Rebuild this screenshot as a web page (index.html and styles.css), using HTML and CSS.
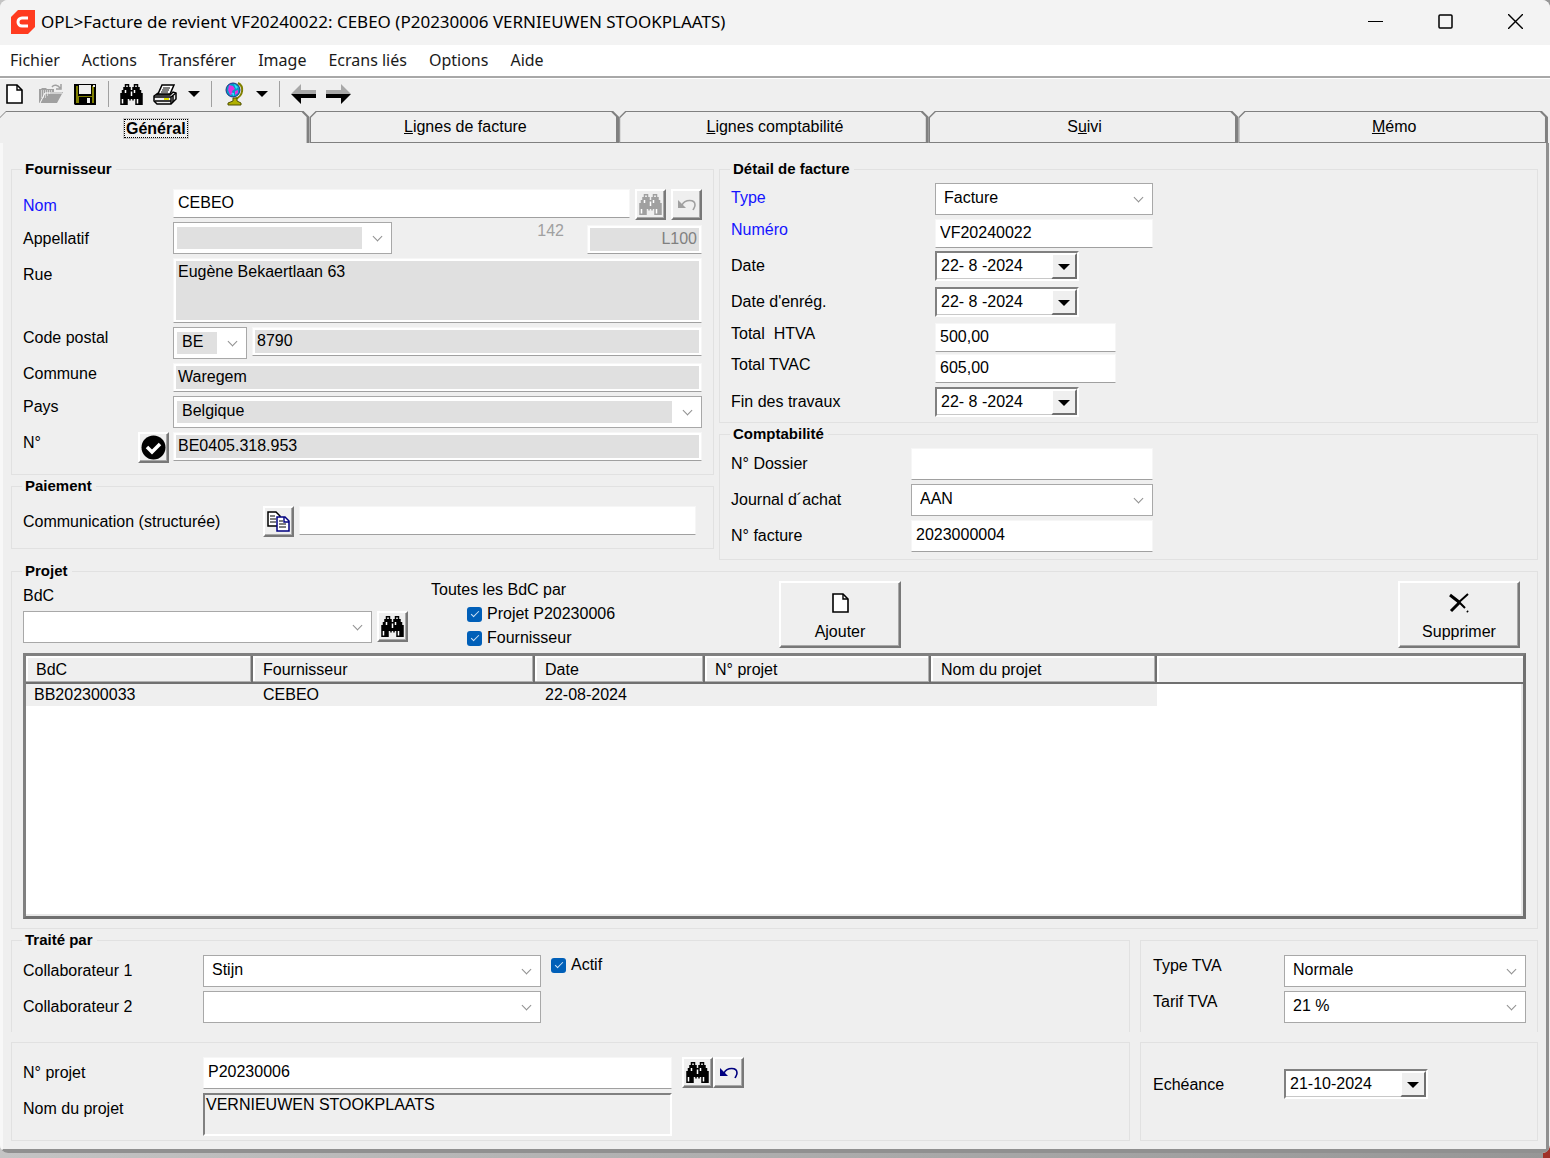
FILE: index.html
```html
<!DOCTYPE html>
<html lang="fr">
	<head>
		<meta charset="utf-8">
		<title>OPL&gt;Facture de revient VF20240022</title>
		<link rel="stylesheet" href="styles.css">
	</head>
	<body>
		<!-- icones partagees -->
		<svg class="defs" aria-hidden="true">
			<symbol id="i-find" viewBox="0 0 15 14">
				<path fill="currentColor" d="M3 0h3v2h1v2h1V2h1V0h3v2h1v2h1v2h1v8h-5v-4H9v1H8v-1H7v1H6v-1H5v4H0V6h1V4h1V2h1z"/>
				<path fill="#fff" d="M4 1h1v1H4zM10 1h1v1h-1zM3 4h1v2H3zM9 4h1v2H9zM7 5h1v3H7zM1 10h1v3H1zM11 10h1v3h-1z"/>
			</symbol>
			<symbol id="i-undo" viewBox="0 0 18 12">
				<path fill="currentColor" d="M0 1l8 8H0z"/>
				<path fill="none" stroke="currentColor" stroke-width="1.6" d="M4 6c3-6 13-6 13 0 0 2-1 3-2 5"/>
			</symbol>
			<symbol id="i-new" viewBox="0 0 17 20">
				<path fill="#fff" stroke="#000" stroke-width="1.6" d="M1 1h10l5 5v13H1z"/>
				<path fill="none" stroke="#000" stroke-width="1.4" d="M11 1v5h5"/>
			</symbol>
		</svg>

		<div class="window">
			<header class="titlebar">
				<svg class="logo" viewBox="0 0 24 24"><path fill="#ff3b1f" d="M7 0h17v17l-7 7H0V7z"/><path fill="none" stroke="#fff" stroke-width="3" d="M17 8h-6a4 4 0 0 0 0 8h6"/></svg>
				<h1>OPL&gt;Facture de revient VF20240022: CEBEO (P20230006 VERNIEUWEN STOOKPLAATS)</h1>
				<button type="button" class="winbtn" aria-label="Réduire"><svg width="15" height="15" viewBox="0 0 15 15"><path stroke="#000" d="M0 7.500h15"/></svg></button>
				<button type="button" class="winbtn" aria-label="Agrandir"><svg width="15" height="15" viewBox="0 0 15 15"><rect x="1" y="1" width="13" height="13" rx="1" fill="none" stroke="#000" stroke-width="1.500"/></svg></button>
				<button type="button" class="winbtn" aria-label="Fermer"><svg width="15" height="15" viewBox="0 0 15 15"><path stroke="#000" stroke-width="1.400" d="M0 0l15 15M15 0L0 15"/></svg></button>
			</header>

			<nav class="menubar">
				<a href="#">Fichier</a>
				<a href="#">Actions</a>
				<a href="#">Transférer</a>
				<a href="#">Image</a>
				<a href="#">Ecrans liés</a>
				<a href="#">Options</a>
				<a href="#">Aide</a>
			</nav>

			<div class="toolbar">
				<button type="button" class="tool" aria-label="Nouveau"><svg width="17" height="20"><use href="#i-new"/></svg></button>
				<button type="button" class="tool" aria-label="Ouvrir">
					<svg width="25" height="20" viewBox="0 0 25 20"><path fill="#a0a0a0" d="M0 5h2l1-1h4l1 1h7v3h9l-6 11H0z"/><path fill="none" stroke="#fff" stroke-dasharray="1 1" d="M2 7h11M2 9h9M2 11h7M2 13h5"/><path fill="none" stroke="#fff" d="M1 19L6 9h17"/><path fill="none" stroke="#a0a0a0" stroke-width="1.500" d="M13 3c2-3 6-2 8 1M22 0v5h-5"/></svg>
				</button>
				<button type="button" class="tool" aria-label="Enregistrer">
					<svg width="22" height="21" viewBox="0 0 22 21"><path d="M0 0h22v21H1l-1-1z"/><path fill="#808000" d="M2 2h2v10h14V2h2v17H2z"/><path fill="#efefef" d="M5 1h12v9H5z"/><path d="M5 13h13v7H5z"/><path fill="#efefef" d="M13 14h3v5h-3zM19 1h2v2h-2z"/></svg>
				</button>
				<span class="sep"></span>
				<button type="button" class="tool" aria-label="Rechercher"><svg width="23" height="21"><use href="#i-find"/></svg></button>
				<button type="button" class="tool" aria-label="Imprimer">
					<svg width="25" height="21" viewBox="0 0 25 21"><path fill="#fff" stroke="#000" stroke-width="1.500" d="M9 1h12l-4 9H5z"/><path stroke="#000" d="M10 4h7M9 6h7M8 8h7"/><path fill="#efefef" stroke="#000" stroke-width="1.500" d="M5 9l-4 3v5l3 3h14l5-5V9l-3-1-3 3H3"/><path fill="none" stroke="#000" stroke-width="1.500" d="M1 13h17l5-4M18 13v7M2 17h16M20 12v6"/><path fill="#e0e000" d="M11 14h5v2h-5z"/></svg>
				</button>
				<button type="button" class="drop" aria-label="Options d'impression"></button>
				<span class="sep"></span>
				<button type="button" class="tool" aria-label="Web">
					<svg width="23" height="24" viewBox="-2 0 23 24"><path fill="none" stroke="#808000" stroke-width="2" d="M13 1c6 3 6 13-3 16"/><circle cx="8" cy="8" r="7" fill="#00a0c8" stroke="#203080"/><path fill="#e030e0" d="M4 3l4 1 2 3-3 2 1 3-3 1-2-5zM10 9l3-1v3l-3 2z"/><path fill="#30e0ff" d="M9 2l4 3-2 2zM6 11h3v3z"/><path fill="#b0b000" stroke="#505000" d="M8 16h4v3l4 2v2H3v-2l5-2z"/></svg>
				</button>
				<button type="button" class="drop" aria-label="Options web"></button>
				<span class="sep"></span>
				<button type="button" class="tool" aria-label="Précédent">
					<svg width="25" height="20" viewBox="0 0 25 20"><path fill="#a8a8a8" d="M0 10L10 0v6h15v4z"/><path d="M0 10h25v4H10v6z"/></svg>
				</button>
				<button type="button" class="tool" aria-label="Suivant">
					<svg width="25" height="20" viewBox="0 0 25 20"><path fill="#a8a8a8" d="M25 10L15 0v6H0v4z"/><path d="M25 10H0v4h15v6z"/></svg>
				</button>
			</div>

			<div class="tabs" role="tablist">
				<button type="button" role="tab" class="tab active" aria-selected="true"><span>Général</span></button>
				<button type="button" role="tab" class="tab"><span><u>L</u>ignes de facture</span></button>
				<button type="button" role="tab" class="tab"><span><u>L</u>ignes comptabilité</span></button>
				<button type="button" role="tab" class="tab"><span>S<u>u</u>ivi</span></button>
				<button type="button" role="tab" class="tab"><span><u>M</u>émo</span></button>
			</div>

			<main class="panel">
				<div class="top">
					<div class="col">
						<fieldset class="group">
							<legend>Fournisseur</legend>
							<div class="form supplier">
								<label class="req" for="nom">Nom</label>
								<div class="line">
									<input type="text" class="text grow" id="nom" value="CEBEO">
									<button type="button" class="sq" disabled aria-label="Rechercher"><svg width="23" height="21"><use href="#i-find"/></svg></button>
									<button type="button" class="sq" disabled aria-label="Annuler"><svg width="18" height="12"><use href="#i-undo"/></svg></button>
								</div>
								<label for="appellatif">Appellatif</label>
								<div class="line bottom">
									<span class="combo off title"><select id="appellatif" disabled><option></option></select></span>
									<output class="num">142</output>
									<input type="text" class="text off code" value="L100" disabled aria-label="Code">
								</div>
								<label for="rue">Rue</label>
								<textarea class="text off street" id="rue" readonly>Eugène Bekaertlaan 63</textarea>
								<label class="tight" for="cp">Code postal</label>
								<div class="line">
									<span class="combo off country"><select disabled aria-label="Code pays"><option>BE</option></select></span>
									<input type="text" class="text off grow" id="cp" value="8790" readonly>
								</div>
								<label class="tight" for="commune">Commune</label>
								<input type="text" class="text off" id="commune" value="Waregem" readonly>
								<label class="tight" for="pays">Pays</label>
								<span class="combo off"><select id="pays" disabled><option>Belgique</option></select></span>
								<div class="vat">
									<label class="tight" for="tva">N°</label>
									<button type="button" class="sq" aria-label="Vérifier"><svg width="25" height="25" viewBox="0 0 25 25"><circle cx="12.500" cy="12.500" r="12"/><path fill="none" stroke="#fff" stroke-width="3.500" d="M6 12l5 5 8-8"/></svg></button>
								</div>
								<input type="text" class="text off" id="tva" value="BE0405.318.953" readonly>
							</div>
						</fieldset>

						<fieldset class="group">
							<legend>Paiement</legend>
							<div class="line payment">
								<label for="comm">Communication (structurée)</label>
								<button type="button" class="sq" aria-label="Copier">
									<svg width="23" height="21" viewBox="0 0 23 21"><path fill="#fff" stroke="#000" stroke-width="1.500" d="M1 1h8l4 4v10H1z"/><path stroke="#000" d="M3 5h5M3 8h6M3 11h6"/><path fill="#fff" stroke="#000080" stroke-width="1.500" d="M10 6h8l4 4v10H10z"/><path fill="none" stroke="#000080" stroke-width="1.400" d="M17 6v5h5"/><path stroke="#000" d="M12 10h4M12 13h7M12 16h7"/></svg>
								</button>
								<input type="text" class="text grow" id="comm">
							</div>
						</fieldset>
					</div>

					<div class="col">
						<fieldset class="group">
							<legend>Détail de facture</legend>
							<div class="form detail">
								<label class="req" for="type">Type</label>
								<span class="combo"><select id="type"><option>Facture</option></select></span>
								<label class="req tight" for="numero">Numéro</label>
								<input type="text" class="text" id="numero" value="VF20240022">
								<label for="date">Date</label>
								<span class="date"><input type="text" id="date" value="22- 8 -2024"><button type="button" aria-label="Calendrier"></button></span>
								<label for="enreg">Date d'enrég.</label>
								<span class="date"><input type="text" id="enreg" value="22- 8 -2024"><button type="button" aria-label="Calendrier"></button></span>
								<label class="tight" for="htva">Total&nbsp; HTVA</label>
								<input type="text" class="text amount" id="htva" value="500,00">
								<label class="tight" for="tvac">Total TVAC</label>
								<input type="text" class="text amount" id="tvac" value="605,00">
								<label for="fin">Fin des travaux</label>
								<span class="date"><input type="text" id="fin" value="22- 8 -2024"><button type="button" aria-label="Calendrier"></button></span>
							</div>
						</fieldset>

						<fieldset class="group fill">
							<legend>Comptabilité</legend>
							<div class="form accounting">
								<label for="dossier">N° Dossier</label>
								<input type="text" class="text tall" id="dossier">
								<label for="journal">Journal d´achat</label>
								<span class="combo"><select id="journal"><option>AAN</option></select></span>
								<label for="nfact">N° facture</label>
								<input type="text" class="text tall" id="nfact" value="2023000004">
							</div>
						</fieldset>
					</div>
				</div>

				<fieldset class="group project">
					<legend>Projet</legend>
					<div class="actions">
						<div class="order">
							<label for="bdc">BdC</label>
							<div class="line">
								<span class="combo grow"><select id="bdc"><option></option></select></span>
								<button type="button" class="sq" aria-label="Rechercher"><svg width="23" height="21"><use href="#i-find"/></svg></button>
							</div>
						</div>
						<div class="filters">
							<p>Toutes les BdC par</p>
							<label class="check"><input type="checkbox" checked>Projet P20230006</label>
							<label class="check"><input type="checkbox" checked>Fournisseur</label>
						</div>
						<button type="button" class="big"><svg width="17" height="20"><use href="#i-new"/></svg>Ajouter</button>
						<button type="button" class="big delete"><svg width="20" height="20" viewBox="0 0 20 20"><path fill="none" stroke="#000" stroke-width="3" d="M1 2l9 7M2 18l9-9"/><path fill="none" stroke="#000" stroke-width="2" d="M9 8l7 7M9 10l10-9M18 18l1 1"/></svg>Supprimer</button>
					</div>
					<div class="list">
						<table>
							<colgroup><col class="c1"><col class="c2"><col class="c3"><col class="c4"><col class="c4"><col></colgroup>
							<thead>
								<tr><th>BdC</th><th>Fournisseur</th><th>Date</th><th>N° projet</th><th>Nom du projet</th><th></th></tr>
							</thead>
							<tbody>
								<tr><td>BB202300033</td><td>CEBEO</td><td>22-08-2024</td><td></td><td></td><td></td></tr>
							</tbody>
						</table>
					</div>
				</fieldset>

				<div class="footer">
					<fieldset class="group opened">
						<legend>Traité par</legend>
						<div class="form staff">
							<label for="col1">Collaborateur 1</label>
							<div class="line">
								<span class="combo"><select id="col1"><option>Stijn</option></select></span>
								<label class="check"><input type="checkbox" checked>Actif</label>
							</div>
							<label for="col2">Collaborateur 2</label>
							<span class="combo"><select id="col2"><option></option></select></span>
						</div>
					</fieldset>
					<div class="box opened">
						<div class="form vatform">
							<label class="tight" for="typetva">Type TVA</label>
							<span class="combo"><select id="typetva"><option>Normale</option></select></span>
							<label class="tight" for="tarif">Tarif TVA</label>
							<span class="combo"><select id="tarif"><option>21 %</option></select></span>
						</div>
					</div>
					<div class="box">
						<div class="form ref">
							<label for="nproj">N° projet</label>
							<div class="line">
								<input type="text" class="text tall wide" id="nproj" value="P20230006">
								<div class="pair">
									<button type="button" class="sq" aria-label="Rechercher"><svg width="23" height="21"><use href="#i-find"/></svg></button>
									<button type="button" class="sq undo" aria-label="Annuler"><svg width="18" height="12"><use href="#i-undo"/></svg></button>
								</div>
							</div>
							<label for="nomproj">Nom du projet</label>
							<textarea class="sunken wide" id="nomproj" readonly>VERNIEUWEN STOOKPLAATS</textarea>
						</div>
					</div>
					<div class="box">
						<div class="form due">
							<label for="ech">Echéance</label>
							<span class="date"><input type="text" id="ech" value="21-10-2024"><button type="button" aria-label="Calendrier"></button></span>
						</div>
					</div>
				</div>
			</main>
		</div>
	</body>
</html>
```
FILE: styles.css
```css
*{box-sizing: border-box;}
body{
	margin: 0;
	min-height: 100vh;
	padding-bottom: 5px;
	display: flex;
	flex-direction: column;
	background:
		linear-gradient(#a03028,#a03028) right bottom/7px 12px no-repeat,
		linear-gradient(to right,#c4c4c4,#969696);
	font-family: "Liberation Sans", Arial, sans-serif;
	font-size: 16px;
	color: #000;
}
input,select,textarea,button{font: inherit;color: inherit;margin: 0;border-radius: 0;}
input,textarea{outline: none;}
p{margin: 0;}
.defs{position: absolute;width: 0;height: 0;}

.window{
	flex: 1;
	display: flex;
	flex-direction: column;
	background: #efefef;
	border-radius: 8px;
	overflow: hidden;
}

/* barre de titre */
.titlebar{
	display: flex;
	align-items: center;
	height: 45px;
	padding: 0 0 2px 11px;
	background: #f3f3f3;
}
.logo{width: 24px;height: 24px;margin-right: 6px;}
.titlebar h1{
	flex: 1;
	margin: 0;
	font: 17px/24px "Noto Sans", "Open Sans", sans-serif;
}
.winbtn{width: 70px;height: 43px;padding: 0;border: 0;background: none;}
.winbtn svg{display: block;margin: 0 auto;}

.menubar{
	display: flex;
	gap: 22px;
	height: 33px;
	padding-left: 10px;
	background: #fff;
	border-bottom: 2px solid #a8a8a8;
	font: 16px/30px "Noto Sans", "Open Sans", sans-serif;
}
.menubar a{color: #1a1a1a;text-decoration: none;}

.toolbar{
	display: flex;
	align-items: center;
	gap: 10px;
	height: 33px;
	padding: 0 0 2px 6px;
	border-top: 1px solid #fff;
}
.tool{min-width: 23px;padding: 0;border: 0;background: none;}
.tool svg{display: block;}
.sep{width: 1px;height: 26px;margin: 0 1px;background: #a0a0a0;}
.drop{
	width: 12px;
	height: 6px;
	padding: 0;
	border: 0;
	background: #000;
	clip-path: polygon(0 0,100% 0,50% 100%);
}

/* onglets */
.tabs{display: flex;height: 32px;padding-right: 2px;}
.tab{
	flex: 1;
	position: relative;
	padding: 0 0 0 2px;
	border: 0;
	background: #808080;
	clip-path: polygon(0 6px,6px 0,calc(100% - 6px) 0,100% 6px,100% 100%,0 100%);
}
.tab::before{
	content: "";
	position: absolute;
	inset: 1px 3px 1px 1px;
	background: #efefef;
	clip-path: polygon(0 6px,6px 0,calc(100% - 5px) 0,100% 5px,100% 100%,0 100%);
}
.tab span{position: relative;}
.tab.active{padding-top: 4px;font-weight: bold;}
.tab.active::before{left: 0;bottom: 0;}
.tab.active span{padding: 0 1px;border: 1px dotted #000;outline: 1px solid #c8c8c8;}

.panel{
	flex: 1;
	display: flex;
	flex-direction: column;
	gap: 2px;
	margin-right: 1px;
	padding: 17px 8px 8px;
	border-left: 3px solid #f8f8f8;
	border-right: 3px solid #909090;
	border-bottom: 4px solid #909090;
}
.top{display: grid;grid-template-columns: 703fr 819fr;gap: 5px;}
.col{display: flex;flex-direction: column;gap: 2px;}
.col:first-child{padding-bottom: 11px;}

.group,.box{
	min-width: 0;
	margin: 0;
	border: 1px solid #e1e1e1;
}
.group{padding: 0 11px 4px;}
.group legend{
	padding: 0 4px 0 3px;
	margin-left: -1px;
	font-weight: bold;
	font-size: 15px;
	line-height: 18px;
}
.fill{flex: 1;}
.group.opened,.box.opened{border-bottom: 0;}

.form{display: grid;align-items: start;}
label{line-height: 32px;white-space: nowrap;}
label.tight{line-height: 22px;}
.req{color: #1414ff;}
.line{display: flex;gap: 5px;}
.line.bottom{align-items: flex-end;}
.grow{flex: 1;}

.supplier{
	grid-template-columns: 150px 1fr;
	grid-template-rows: 33px 36px 69px 36px 33px 36px 30px;
	padding: 11px 0 8px;
}
.supplier > label:not(.tight){line-height: 34px;}
.detail{
	grid-template-columns: 204px 218px;
	grid-template-rows: 36px 32px 36px 36px 31px 33px 30px;
	padding: 5px 0 1px;
}
.detail label:not(.tight){line-height: 30px;}
.accounting{
	grid-template-columns: 180px 242px;
	grid-template-rows: 36px 36px 32px;
	padding-top: 5px;
}
.payment{padding: 11px 6px 6px 0;}
.payment label{width: 235px;}
.staff{grid-template-columns: 180px 1fr;grid-template-rows: 36px 36px;padding-top: 6px;}
.vatform{grid-template-columns: 131px 1fr;grid-template-rows: 36px 36px;padding: 14px 11px 0 12px;}
.ref{grid-template-columns: 180px 1fr;grid-template-rows: 36px 43px;padding: 14px 11px 4px;}
.due{grid-template-columns: 131px 1fr;padding: 26px 11px 0 12px;}

/* champs */
.text{
	width: 100%;
	min-width: 0;
	height: 29px;
	padding: 0 4px 1px;
	border: 1px solid #f6f6f6;
	border-bottom-color: #a0a0a0;
	background: #fff;
}
.text.off{background: #e0e0e0;box-shadow: inset 0 0 0 2px #fff;}
.text.tall{height: 32px;padding-bottom: 3px;}
.text.amount{width: 181px;}
.text.code{width: 115px;text-align: right;color: #808080;}
.text.street{height: 65px;padding-top: 4px;resize: none;}
.line .grow{width: auto;}
.num{margin: 0 18px 0 auto;align-self: flex-start;line-height: 18px;color: #a0a0a0;}
.line .wide,.wide{width: 469px;}
.sunken{
	height: 43px;
	padding: 0 1px;
	resize: none;
	background: #efefef;
	border: 2px solid;
	border-color: #808080 #fff #fff #808080;
	line-height: 20px;
}

.combo{
	position: relative;
	display: block;
	height: 32px;
	padding: 4px 29px 4px 3px;
	background: #fff;
	border: 1px solid #a8a8a8;
}
.combo::after{
	content: "";
	position: absolute;
	right: 10px;
	top: 10px;
	width: 6px;
	height: 6px;
	border: solid #909090;
	border-width: 0 1px 1px 0;
	transform: rotate(45deg);
}
.combo select{
	display: block;
	width: 100%;
	height: 22px;
	padding: 0 0 3px 5px;
	border: 0;
	appearance: none;
	background: none;
	opacity: 1;
}
.combo.off select{background: #e0e0e0;}
.combo.title{width: 219px;}
.combo.country{width: 74px;}
.staff .combo{width: 338px;}

.date{
	display: flex;
	width: 144px;
	height: 30px;
	border: 2px solid;
	border-color: #808080 #fff #fff #808080;
	box-shadow: inset -1px -1px #c8c8c8;
	background: #fff;
}
.date input{flex: 1;min-width: 0;padding: 0 4px;border: 0;background: none;}
.date button{
	width: 26px;
	padding: 0;
	background: #efefef;
	border: 2px solid;
	border-color: #fff #707070 #707070 #fff;
}
.date button::before{
	content: "";
	display: block;
	width: 12px;
	height: 6px;
	margin: 2px auto 0;
	background: #000;
	clip-path: polygon(0 0,100% 0,50% 100%);
}

/* boutons en relief */
.sq,.big{
	padding: 0;
	background: #efefef;
	border: 2px solid;
	border-color: #fff #787878 #787878 #fff;
	box-shadow: inset -1px -1px #a8a8a8;
}
.sq{flex: none;width: 31px;height: 31px;}
.sq svg{display: block;margin: 0 auto;}
.sq:disabled{color: #a0a0a0;}
.sq.undo{color: #000080;}
.pair{display: flex;margin-left: 5px;}
.vat{display: flex;justify-content: space-between;padding-right: 4px;}
.big{width: 122px;height: 67px;padding-top: 2px;line-height: 20px;}
.big svg{display: block;margin: 4px auto 9px;}
.delete{margin: 0 6px 0 auto;}

.check{display: flex;align-items: center;line-height: 24px;}
.check input{
	position: relative;
	appearance: none;
	width: 15px;
	height: 15px;
	margin-right: 5px;
	border-radius: 3px;
	background: #005fb8;
}
.check input:checked::after{
	content: "";
	position: absolute;
	left: 4px;
	top: 4px;
	width: 7px;
	height: 3px;
	border: solid #cfe4f8;
	border-width: 0 0 1px 1px;
	transform: rotate(-45deg);
}
.staff .check{margin-left: 5px;align-self: flex-start;line-height: 20px;}

/* projet */
.project{flex: 1;padding-bottom: 8px;}
.actions{display: flex;align-items: flex-start;height: 73px;padding-top: 1px;}
.order{width: 385px;margin-right: 23px;}
.order label{display: block;line-height: 30px;}
.filters{width: 348px;}
.filters p{margin-bottom: 3px;line-height: 18px;}
.filters .check{margin-left: 36px;}
.list{
	min-height: 266px;
	background: #fff;
	border: 3px solid;
	border-color: #808080 #707070 #707070 #808080;
	box-shadow: inset -2px -2px #e8e8e8;
}
table{width: 100%;table-layout: fixed;border-collapse: collapse;}
.c1{width: 227px;}
.c2{width: 282px;}
.c3{width: 170px;}
.c4{width: 226px;}
th,td{padding: 0 0 0 10px;text-align: left;font-weight: normal;white-space: nowrap;}
th{
	height: 28px;
	background: #efefef;
	box-shadow: inset -2px -2px #707070, inset -3px -3px #b0b0b0, inset 2px 2px #fff;
}
th:last-child{box-shadow: inset 0 -2px #707070, inset 2px 2px #fff;}
td{height: 22px;background: #efefef;}
td:first-child{padding-left: 8px;}
td:last-child{background: none;}

.footer{
	display: grid;
	grid-template-columns: 1fr 398px;
	gap: 10px;
}
.footer .opened{height: 101px;}
.footer .box.opened{height: 92px;margin-top: 9px;}
```
